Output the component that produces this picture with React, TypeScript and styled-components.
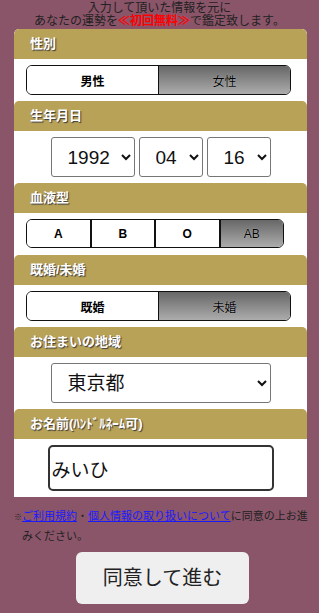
import { useState } from "react";
import styled, { createGlobalStyle } from "styled-components";

const GlobalStyle = createGlobalStyle`
  html, body {
    margin: 0;
    padding: 0;
    background: #8b5569;
  }
  body {
    font-family: "Liberation Sans", "Noto Sans CJK JP", sans-serif;
    color: #222;
  }
`;

const Page = styled.div`
  width: 319px;
  min-height: 613px;
  background: #8b5569;
  padding-top: 2px;
  box-sizing: border-box;
`;

const Lead = styled.p`
  margin: 0;
  font-size: 12px;
  line-height: 13px;
  text-align: center;
  color: #222;
`;

const Free = styled.span`
  color: #ff0000;
  font-weight: bold;
`;

const Card = styled.div`
  margin: 1px 12px 0 14px;
  background: #fff;
  border-radius: 5px 5px 0 0;
  overflow: hidden;
`;

const Heading = styled.div`
  height: 30px;
  line-height: 30px;
  padding-left: 16px;
  background: #b8a258;
  border-radius: 5px 5px 0 0;
  color: #fff;
  font-size: 13px;
  font-weight: bold;
  text-shadow: 1px 1px 1px #3a3a3a;
`;

const Body = styled.div<{ $center?: boolean; $bottom?: number }>`
  padding: 6px 0 ${(p) => p.$bottom ?? 6}px ${(p) => (p.$center ? "0" : "12px")};
  display: flex;
  justify-content: ${(p) => (p.$center ? "center" : "flex-start")};
  gap: 4px;
`;

const Toggle = styled.div<{ $width: number; $height: number }>`
  display: flex;
  width: ${(p) => p.$width}px;
  height: ${(p) => p.$height}px;
  box-sizing: border-box;
  border: 1.5px solid #111;
  border-radius: 6px;
  overflow: hidden;
`;

const Choice = styled.button<{ $active: boolean; $divider: number }>`
  flex: 1;
  margin: 0;
  padding: 0;
  border: none;
  border-left: ${(p) => p.$divider}px solid #111;
  &:first-child {
    border-left: none;
  }
  font-family: "Liberation Sans", "Noto Sans CJK JP", sans-serif;
  font-size: 12px;
  cursor: pointer;
  background: ${(p) =>
    p.$active ? "linear-gradient(#676767, #acacac)" : "#fff"};
  color: #000;
  font-weight: ${(p) => (p.$active ? "normal" : "bold")};
  text-shadow: ${(p) => (p.$active ? "0 0 1px rgba(255,255,255,0.7)" : "none")};
`;

const Select = styled.select<{ $width: number }>`
  width: ${(p) => p.$width}px;
  height: 40px;
  padding: 0 6px 0 12px;
  border: 1px solid #767676;
  border-radius: 3px;
  background: #fff;
  color: #111;
  font-family: "Liberation Sans", "Noto Sans CJK JP", sans-serif;
  font-size: 19px;
`;

const NameInput = styled.input`
  width: 226px;
  height: 46px;
  box-sizing: border-box;
  padding: 0 2px;
  border: 2px solid #333;
  border-radius: 5px;
  font-family: "Liberation Sans", "Noto Sans CJK JP", sans-serif;
  font-size: 19px;
  color: #111;
  outline: none;
`;

const Notice = styled.p`
  margin: 10px 6px 0 14px;
  padding-left: 8px;
  text-indent: -8px;
  font-size: 11px;
  line-height: 18px;
  color: #222;
`;

const Mark = styled.span`
  font-size: 8px;
`;

const TextLink = styled.a`
  color: #1a1aff;
  text-decoration: underline;
`;

const Actions = styled.div`
  display: flex;
  justify-content: center;
  padding: 7px 0 0 6px;
`;

const Submit = styled.button`
  width: 173px;
  height: 52px;
  padding: 0 0 3px;
  border: none;
  border-radius: 6px;
  background: #efefef;
  color: #222;
  font-family: "Liberation Sans", "Noto Sans CJK JP", sans-serif;
  font-size: 20px;
  cursor: pointer;
`;

const years = Array.from({ length: 80 }, (_, i) => String(1940 + i));
const months = Array.from({ length: 12 }, (_, i) => String(i + 1).padStart(2, "0"));
const days = Array.from({ length: 31 }, (_, i) => String(i + 1).padStart(2, "0"));
const prefs = ["北海道", "東京都", "大阪府", "京都府", "神奈川県", "愛知県", "福岡県"];

export default function App() {
  const [gender, setGender] = useState("女性");
  const [blood, setBlood] = useState("AB");
  const [married, setMarried] = useState("未婚");
  const [year, setYear] = useState("1992");
  const [month, setMonth] = useState("04");
  const [day, setDay] = useState("16");
  const [pref, setPref] = useState("東京都");
  const [name, setName] = useState("みいひ");

  return (
    <Page>
      <GlobalStyle />
      <Lead>
        入力して頂いた情報を元に
        <br />
        あなたの運勢を<Free>≪初回無料≫</Free>で鑑定致します。
      </Lead>

      <Card>
        <Heading>性別</Heading>
        <Body>
          <Toggle $width={265} $height={30}>
            {["男性", "女性"].map((g) => (
              <Choice key={g} $active={gender === g} $divider={1} onClick={() => setGender(g)}>
                {g}
              </Choice>
            ))}
          </Toggle>
        </Body>

        <Heading>生年月日</Heading>
        <Body $center>
          <Select $width={84} value={year} onChange={(e) => setYear(e.target.value)}>
            {years.map((y) => (
              <option key={y}>{y}</option>
            ))}
          </Select>
          <Select $width={64} value={month} onChange={(e) => setMonth(e.target.value)}>
            {months.map((m) => (
              <option key={m}>{m}</option>
            ))}
          </Select>
          <Select $width={64} value={day} onChange={(e) => setDay(e.target.value)}>
            {days.map((d) => (
              <option key={d}>{d}</option>
            ))}
          </Select>
        </Body>

        <Heading>血液型</Heading>
        <Body $bottom={7}>
          <Toggle $width={258} $height={29}>
            {["A", "B", "O", "AB"].map((b) => (
              <Choice key={b} $active={blood === b} $divider={2} onClick={() => setBlood(b)}>
                {b}
              </Choice>
            ))}
          </Toggle>
        </Body>

        <Heading>既婚/未婚</Heading>
        <Body>
          <Toggle $width={265} $height={30}>
            {["既婚", "未婚"].map((m) => (
              <Choice key={m} $active={married === m} $divider={1} onClick={() => setMarried(m)}>
                {m}
              </Choice>
            ))}
          </Toggle>
        </Body>

        <Heading>お住まいの地域</Heading>
        <Body $center>
          <Select $width={220} value={pref} onChange={(e) => setPref(e.target.value)}>
            {prefs.map((p) => (
              <option key={p}>{p}</option>
            ))}
          </Select>
        </Body>

        <Heading>お名前(ﾊﾝﾄﾞﾙﾈｰﾑ可)</Heading>
        <Body $center>
          <NameInput value={name} onChange={(e) => setName(e.target.value)} />
        </Body>
      </Card>

      <Notice>
        <Mark>※</Mark>
        <TextLink href="#">ご利用規約</TextLink>・<TextLink href="#">個人情報の取り扱いについて</TextLink>に同意の上お進みください。
      </Notice>

      <Actions>
        <Submit>同意して進む</Submit>
      </Actions>
    </Page>
  );
}
